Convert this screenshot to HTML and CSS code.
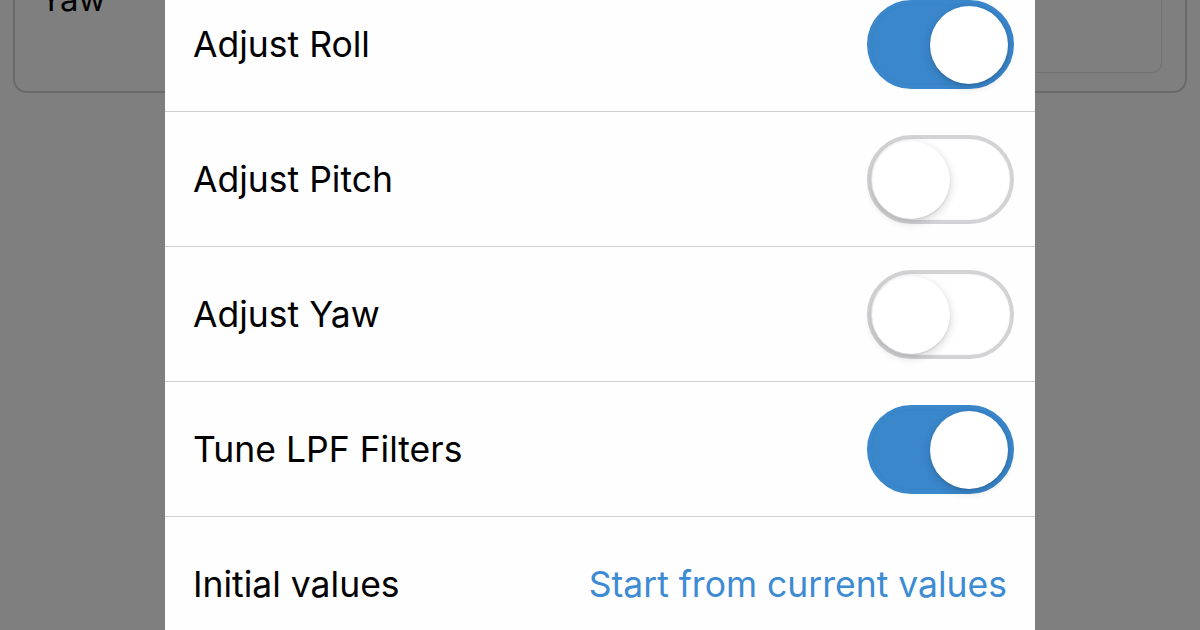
FILE: index.html
```html
<!DOCTYPE html>
<html lang="en">
<head>
	<title>PID tuning</title>
	<link rel="stylesheet" href="styles.css">
</head>
<body>
<div class="page">
	<div class="card">
		<div class="card-label">Yaw</div>
		<div class="card-field"></div>
	</div>
</div>
<div class="sheet">
	<div class="row">
		<span class="label">Adjust Roll</span>
		<span class="switch on"><span class="knob"></span></span>
	</div>
	<div class="row">
		<span class="label">Adjust Pitch</span>
		<span class="switch"><span class="knob"></span></span>
	</div>
	<div class="row">
		<span class="label">Adjust Yaw</span>
		<span class="switch"><span class="knob"></span></span>
	</div>
	<div class="row">
		<span class="label">Tune LPF Filters</span>
		<span class="switch on"><span class="knob"></span></span>
	</div>
	<div class="row">
		<span class="label">Initial values</span>
		<span class="link">Start from current values</span>
	</div>
</div>
</body>
</html>
```

FILE: styles.css
```css
body {
	margin: 0;
	background: #7f7f7f;
	font-family: Inter, "Noto Sans", sans-serif;
	overflow: hidden;
	height: 630px;
	position: relative;
}

.page {
	padding: 0 13px;
}

.card {
	margin-top: -60px;
	height: 151px;
	border: 2px solid #696969;
	border-top: none;
	border-radius: 0 0 14px 14px;
	display: flex;
	justify-content: space-between;
	align-items: flex-start;
}

.card-label {
	margin: 39px 0 0 25px;
	font-size: 33px;
	line-height: 40px;
	color: #000;
}

.card-field {
	margin: 0 23px 0 0;
	width: 300px;
	height: 132px;
	border: 1px solid #727272;
	border-top: none;
	border-radius: 0 0 10px 10px;
}

.sheet {
	position: absolute;
	left: 165px;
	top: -23px;
	width: 870px;
	background: #fefefe;
}

.row {
	height: 134px;
	border-bottom: 1px solid #cfcfcf;
	display: flex;
	align-items: center;
	justify-content: space-between;
	padding: 0 21px 0 28px;
}

.label {
	font-size: 35.5px;
	color: #000;
}

.link {
	font-size: 35.5px;
	color: #3d8bd3;
	margin-right: 7px;
}

.switch {
	position: relative;
	width: 147px;
	height: 89px;
	border-radius: 45px;
	box-sizing: border-box;
	background: #fff;
	border: 4px solid #d3d3d6;
	box-shadow: inset 0 0 2px rgba(0,0,0,0.08);
}

.switch.on {
	background: #3a87cc;
	border-color: #3a87cc;
}

.knob {
	position: absolute;
	top: 2px;
	left: 1px;
	width: 78px;
	height: 78px;
	border-radius: 50%;
	background: #fff;
	box-shadow: 0 3px 10px rgba(0,0,0,0.18), 0 1px 2px rgba(0,0,0,0.1);
}

.switch.on .knob {
	left: auto;
	right: 2px;
}
```
